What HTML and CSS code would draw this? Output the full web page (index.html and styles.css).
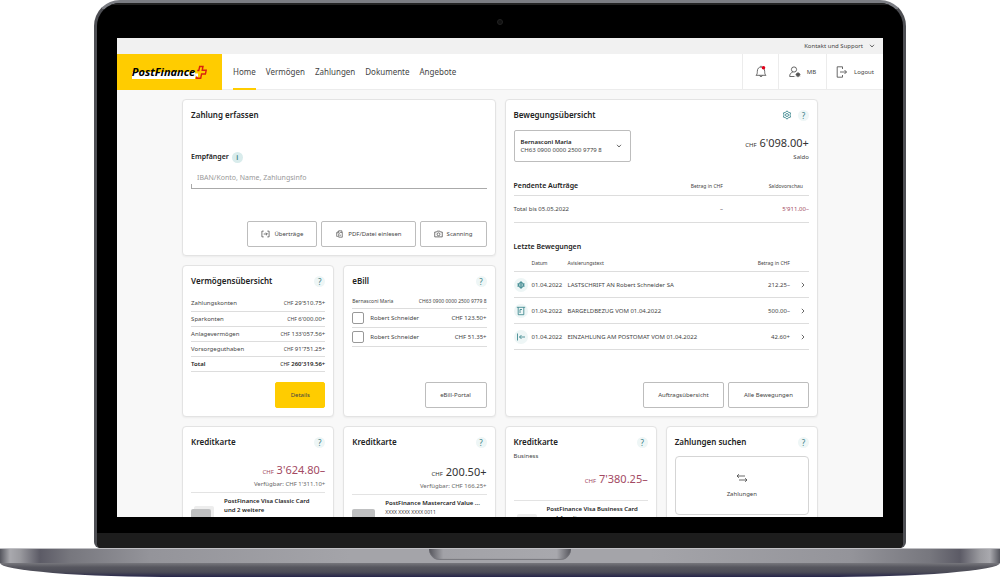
FILE: index.html
```html
<!DOCTYPE html>
<html lang="de">
<head>
<meta charset="utf-8">
<meta name="viewport" content="width=device-width, initial-scale=1">
<title>PostFinance E-Finance</title>
<link rel="stylesheet" href="styles.css">
</head>
<body>
<div class="laptop">
  <div class="lid">
    <div class="bezel-top"><span class="camera"></span></div>
    <div class="screen">
      <div class="topbar">
        <button class="support" type="button">Kontakt und Support
          <svg class="chevron" viewBox="0 0 6 4"><path d="M1 .8 3 3 5 .8"/></svg>
        </button>
      </div>
      <header class="header">
        <a class="logo" href="#" aria-label="PostFinance">
          <span class="logo-text">PostFinance</span>
          <svg class="logo-cross" viewBox="0 0 12 15"><path class="fill" d="M0 8.500H3V12H.5z"/><path class="line" d="M2.300 5.500H3.800L4.700 1.500H8L7.200 5.300H11.200L10.400 9H6.600L5.700 13.200H1.500L1.900 11.500"/></svg>
        </a>
        <nav class="nav">
          <a class="active" href="#">Home</a>
          <a href="#">Vermögen</a>
          <a href="#">Zahlungen</a>
          <a href="#">Dokumente</a>
          <a href="#">Angebote</a>
        </nav>
        <div class="tools">
          <button class="tool bell" type="button" aria-label="Mitteilungen">
            <svg viewBox="0 0 12 14"><path d="M1 10.300C2.300 9.200 2.300 8 2.300 6.500 2.300 3.500 4 2 6 2s3.700 1.500 3.700 4.500c0 1.500 0 2.700 1.300 3.800zM4.700 10.500c.2 1.500 2.400 1.500 2.600 0M6 2V.8"/><circle class="dot" cx="8.500" cy="2.800" r="1.800"/></svg>
          </button>
          <button class="tool user" type="button">
            <svg viewBox="0 0 12 12"><circle cx="5" cy="3.500" r="2.600"/><path d="M3.700 6.200C1.500 7 .7 8 .7 10.500H5.500"/><circle cx="9" cy="8.700" r="1.500"/><path d="M9 6.200v5M6.500 8.700h5M7.300 7l3.400 3.400M10.700 7 7.300 10.400"/></svg>
            <span>MB</span>
          </button>
          <button class="tool logout" type="button">
            <svg viewBox="0 0 12 12"><path d="M6.500 3V.8H1.200v10.400h5.300V9M4 6h6.500M8.500 4l2 2-2 2"/></svg>
            <span>Logout</span>
          </button>
        </div>
      </header>

      <main class="dashboard">
        <section class="card pay">
          <h2>Zahlung erfassen</h2>
          <div class="field">
            <div class="field-label">
              <label for="payee">Empfänger</label>
              <button class="round info" type="button" aria-label="Information">i</button>
            </div>
            <input id="payee" type="text" placeholder="IBAN/Konto, Name, Zahlungsinfo">
          </div>
          <div class="actions">
            <button class="btn" type="button"><svg viewBox="0 0 10 8"><path d="M3 .8H1v6.400h2M7 .8h2v6.400H7M3 4h4M5.500 2.500 7 4 5.500 5.500"/></svg>Überträge</button>
            <button class="btn" type="button"><svg viewBox="0 0 10 10"><path d="M3 8H1.500V3.500L4 1h4v2M4 1v2.500H1.500M4 5l2-2h2.500v6H4zM5 6.500h2"/></svg>PDF/Datei einlesen</button>
            <button class="btn" type="button"><svg viewBox="0 0 10 8"><path d="M.8 1.800h2L3.500.8h3l.7 1h2v5.400H.8z"/><circle cx="5" cy="4.300" r="1.600"/></svg>Scanning</button>
          </div>
        </section>

        <section class="card moves">
          <div class="card-head">
            <h2>Bewegungsübersicht</h2>
            <button class="gear" type="button" aria-label="Einstellungen"><svg viewBox="0 0 10 10"><path d="M5 .8 6.200 2.200 8.600 2.900 8 5l.6 2.100-2.400.7L5 9.200 3.800 7.800 1.400 7.100 2 5 1.400 2.900 3.800 2.200z"/><circle cx="5" cy="5" r="1.500"/></svg></button>
            <button class="round" type="button" aria-label="Hilfe">?</button>
          </div>
          <div class="account-row">
            <button class="account" type="button" aria-haspopup="listbox">
              <span><strong>Bernasconi Maria</strong><br>CH63 0900 0000 2500 9779 8</span>
              <svg class="chevron" viewBox="0 0 6 4"><path d="M1 .8 3 3 5 .8"/></svg>
            </button>
            <div class="balance">
              <div class="amount"><small>CHF</small> 6'098.00+</div>
              <div class="balance-label">Saldo</div>
            </div>
          </div>
          <table class="pending">
            <thead><tr><th>Pendente Aufträge</th><th class="num">Betrag in CHF</th><th class="num preview">Saldovorschau</th></tr></thead>
            <tbody><tr><td>Total bis 05.05.2022</td><td class="num">–</td><td class="num red">5'911.00–</td></tr></tbody>
          </table>
          <h3>Letzte Bewegungen</h3>
          <table class="latest">
            <thead><tr><th class="c-icon"></th><th class="c-date">Datum</th><th>Avisierungstext</th><th class="num">Betrag in CHF</th><th class="c-go"></th></tr></thead>
            <tbody>
              <tr><td><span class="round type"><svg viewBox="0 0 10 10"><circle cx="5" cy="5" r="2.600"/><path d="M5 1v8M1.200 4h7.600M1.200 6h7.600"/></svg></span></td><td>01.04.2022</td><td>LASTSCHRIFT AN Robert Schneider SA</td><td class="num">212.25–</td><td class="go"><svg viewBox="0 0 4 6"><path d="M.8.8 3 3 .8 5.200"/></svg></td></tr>
              <tr><td><span class="round type"><svg viewBox="0 0 10 10"><path d="M.8 1.300h8.400M2.200 1.300v7.400h5.600V1.300M4 7V3.500h2"/></svg></span></td><td>01.04.2022</td><td>BARGELDBEZUG VOM 01.04.2022</td><td class="num">500.00–</td><td class="go"><svg viewBox="0 0 4 6"><path d="M.8.8 3 3 .8 5.200"/></svg></td></tr>
              <tr><td><span class="round type"><svg viewBox="0 0 10 10"><path d="M1.500 1.500v7M3.500 5h5.500M5.500 3l-2 2 2 2"/></svg></span></td><td>01.04.2022</td><td>EINZAHLUNG AM POSTOMAT VOM 01.04.2022</td><td class="num">42.60+</td><td class="go"><svg viewBox="0 0 4 6"><path d="M.8.8 3 3 .8 5.200"/></svg></td></tr>
            </tbody>
          </table>
          <div class="actions wide">
            <button class="btn" type="button">Auftragsübersicht</button>
            <button class="btn" type="button">Alle Bewegungen</button>
          </div>
        </section>

        <section class="card">
          <div class="card-head">
            <h2>Vermögensübersicht</h2>
            <button class="round" type="button" aria-label="Hilfe">?</button>
          </div>
          <table class="assets">
            <tbody>
              <tr><td>Zahlungskonten</td><td class="num"><small>CHF</small> 29'510.75+</td></tr>
              <tr><td>Sparkonten</td><td class="num"><small>CHF</small> 6'000.00+</td></tr>
              <tr><td>Anlagevermögen</td><td class="num"><small>CHF</small> 133'057.56+</td></tr>
              <tr><td>Vorsorgeguthaben</td><td class="num"><small>CHF</small> 91'751.25+</td></tr>
              <tr class="total"><td>Total</td><td class="num"><small>CHF</small> 260'319.56+</td></tr>
            </tbody>
          </table>
          <div class="actions"><button class="btn primary" type="button">Details</button></div>
        </section>

        <section class="card">
          <div class="card-head">
            <h2>eBill</h2>
            <button class="round" type="button" aria-label="Hilfe">?</button>
          </div>
          <div class="ebill-account"><span>Bernasconi Maria</span><span>CH63 0900 0000 2500 9779 8</span></div>
          <label class="bill"><input type="checkbox"><span>Robert Schneider</span><span>CHF 123.50+</span></label>
          <label class="bill"><input type="checkbox"><span>Robert Schneider</span><span>CHF 51.35+</span></label>
          <div class="actions"><button class="btn portal" type="button">eBill-Portal</button></div>
        </section>

        <section class="card credit">
          <div class="card-head"><h2>Kreditkarte</h2><button class="round" type="button" aria-label="Hilfe">?</button></div>
          <div class="credit-sum">
            <div class="amount red"><small>CHF</small> 3'624.80–</div>
            <div class="available">Verfügbar: CHF 1'311.10+</div>
          </div>
          <div class="product">
            <span class="thumb stack"></span>
            <div><strong>PostFinance Visa Classic Card<br>und 2 weitere</strong></div>
          </div>
        </section>

        <section class="card credit">
          <div class="card-head"><h2>Kreditkarte</h2><button class="round" type="button" aria-label="Hilfe">?</button></div>
          <div class="credit-sum low">
            <div class="amount"><small>CHF</small> 200.50+</div>
            <div class="available">Verfügbar: CHF 166.25+</div>
          </div>
          <div class="product">
            <span class="thumb"></span>
            <div><strong>PostFinance Mastercard Value ...</strong><br><span class="masked">XXXX XXXX XXXX 0011</span></div>
          </div>
        </section>

        <section class="card credit">
          <div class="card-head"><h2>Kreditkarte</h2><button class="round" type="button" aria-label="Hilfe">?</button></div>
          <div class="subtitle">Business</div>
          <div class="credit-sum business">
            <div class="amount red"><small>CHF</small> 7'380.25–</div>
          </div>
          <div class="product">
            <span class="thumb stack"></span>
            <div><strong>PostFinance Visa Business Card<br>und 4 weitere</strong></div>
          </div>
        </section>

        <section class="card credit">
          <div class="card-head"><h2>Zahlungen suchen</h2><button class="round" type="button" aria-label="Hilfe">?</button></div>
          <button class="tile" type="button">
            <svg viewBox="0 0 12 10"><path d="M1 3h8M3 1.200 1 3l2 1.800M11 7H3M9 5.200 11 7 9 8.800"/></svg>
            Zahlungen
          </button>
        </section>
      </main>
    </div>
    <div class="bezel-bottom"></div>
  </div>
  <div class="base"><span class="notch"></span></div>
  <div class="underside"></div>
</div>
</body>
</html>
```
FILE: styles.css
```css
* { box-sizing: border-box; }

body {
  margin: 0;
  background: #fff;
  color: #444;
  font-family: "Noto Sans", "Open Sans", sans-serif;
  font-size: 6px;
  line-height: 8px;
}

button, input { font: inherit; color: inherit; }
button { margin: 0; padding: 0; border: 0; background: none; }
a { color: inherit; text-decoration: none; }
h2, h3 { margin: 0; color: #222; font-size: 8px; line-height: 12px; font-weight: 600; }
h3 { font-size: 7px; }
small { font-size: 5px; font-weight: 400; }
strong { color: #222; font-weight: 600; }
svg { fill: none; stroke: #444; stroke-width: 0.8; flex: none; }
table { width: 100%; border-collapse: collapse; }
th, td { padding: 0; text-align: left; font-weight: 400; white-space: nowrap; }
.num { text-align: right; }
.red { color: #a34a63; }

/* Laptop */
.laptop { display: flex; flex-direction: column; height: 100vh; }

.lid {
  display: flex;
  flex: 1;
  flex-direction: column;
  width: 81.2%;
  min-height: 0;
  margin: 0 auto;
  overflow: hidden;
  border: 3px solid #4e4f54;
  border-top-color: #7b7d83;
  border-bottom: 0;
  border-radius: 26px 26px 6px 6px;
  background: #000;
}

.bezel-top { display: flex; flex: none; align-items: center; justify-content: center; height: 35px; border-top: 2px solid #222; }
.camera { width: 6px; height: 6px; border: 1px solid #222; border-radius: 50%; background: #111; }
.bezel-bottom { flex: none; height: 31px; border-bottom: 15px solid #1d1d1d; }

.base {
  display: flex;
  flex: none;
  justify-content: center;
  height: 15px;
  border-top: 1px solid #c0c0c4;
  background: linear-gradient(90deg, #55565e 0, #a9a9ae 1%, #9a9a9f 2%, #5c5b66 4%, #77777e 7%, #94949a 15%, #a4a4a9 35%, #a4a4a9 65%, #94949a 85%, #77777e 93%, #5c5b66 96%, #9a9a9f 98%, #a9a9ae 99%, #55565e);
}
.notch { width: 142px; height: 11px; border-radius: 0 0 12px 12px; background: linear-gradient(90deg, #55555c, #a2a2a7 10%, #a8a8ad 90%, #55555c); box-shadow: inset 0 -1px 1px #77777d; }
.underside { flex: none; height: 14px; border-radius: 0 0 180px 180px / 0 0 14px 14px; background: linear-gradient(#77777d, #56565e 30%, #4c4c57 65%, #26254a); }

/* Application frame */
.screen { flex: 1; min-height: 0; margin: 0 20px; overflow: hidden; background: #f8f8f8; }
.topbar { display: flex; justify-content: flex-end; height: 16px; padding-right: 8px; background: #f1f1f1; }
.support { display: flex; gap: 6px; align-items: center; }
.chevron { width: 6px; height: 4px; }

.header { display: flex; height: 36px; border-bottom: 1px solid #ececec; background: #fff; }
.logo { display: flex; align-items: center; justify-content: center; width: 105px; height: 36px; background: #fc0; }
.logo-text { color: #000; font: italic 700 11px/14px "Noto Sans", sans-serif; background: linear-gradient(transparent 50%, #fff 50%); }
.logo-cross { width: 12px; height: 15px; }
.logo-cross .fill { fill: #fff; stroke: none; }
.logo-cross .line { stroke: #d9230f; stroke-width: 1.4; }

.nav { display: flex; gap: 10px; padding-left: 11px; font-size: 8px; }
.nav a { display: flex; align-items: center; height: 36px; padding-top: 2px; border-bottom: 2px solid transparent; }
.nav .active { border-bottom-color: #fc0; }

.tools { display: flex; margin-left: auto; }
.tool { display: flex; gap: 6px; align-items: center; justify-content: center; border-left: 1px solid #ececec; }
.tool svg { width: 12px; height: 12px; }
.bell { width: 36px; }
.bell svg { height: 14px; }
.bell .dot { fill: #e2001a; stroke: none; }
.user { width: 48px; }
.logout { width: 57px; }

/* Cards */
.dashboard {
  display: grid;
  grid-template-columns: repeat(4, minmax(0, 1fr));
  grid-template-rows: minmax(157px, auto) minmax(152px, auto) minmax(150px, auto);
  gap: 9px;
  padding: 9px 8.5%;
}
.card { display: flex; flex-direction: column; padding: 9px 8px 8px; border: 1px solid #e3e3e3; border-radius: 4px; background: #fff; box-shadow: 0 1px 2px #0000000d; }
.pay { grid-column: span 2; }
.moves { grid-column: span 2; grid-row: span 2; }
.card-head { display: flex; gap: 6px; align-items: center; height: 12px; }
.card-head h2 { flex: 1; }

.round { display: inline-flex; flex: none; align-items: center; justify-content: center; width: 11px; height: 11px; border-radius: 50%; background: #eef6f6; color: #3b7f86; font-size: 8px; line-height: 11px; }
.info { background: #d9ecec; font-size: 7px; }
.gear svg { display: block; width: 10px; height: 10px; stroke: #2f7f86; }

.actions { display: flex; gap: 4px; justify-content: flex-end; margin-top: auto; }
.btn { display: flex; gap: 4px; align-items: center; justify-content: center; height: 26px; padding: 0 13px; border: 1px solid #bdbdbd; border-radius: 2px; background: #fff; }
.btn svg { width: 9px; height: 8px; }
.primary { width: 50px; border-color: #fc0; background: #fc0; }
.portal { width: 62px; padding: 0; }
.wide .btn { width: 81px; padding: 0; }

.field { margin-top: 30px; }
.field-label { display: flex; gap: 3px; align-items: center; height: 12px; color: #222; font-size: 7px; font-weight: 600; }
.field input { display: block; width: 100%; height: 26px; padding: 4px 6px 0; border: 0; border-bottom: 1px solid #aaa; outline: 0; background: linear-gradient(#aaa, #aaa) 0 100% / 1px 4px no-repeat; font-size: 7px; }
.field input::placeholder { color: #999; opacity: 1; }

.account-row { display: flex; justify-content: space-between; margin-top: 9px; }
.account { display: flex; align-items: center; justify-content: space-between; width: 117px; height: 32px; padding: 0 8px 0 6px; border: 1px solid #bdbdbd; border-radius: 2px; text-align: left; }
.balance { padding-top: 6px; text-align: right; }
.amount { color: #333; font-size: 11px; line-height: 13px; }
.amount.red { color: #a34a63; }
.amount small { font-size: 6px; }
.balance-label { line-height: 11px; }

.pending { margin-top: 15px; }
.pending th { height: 17px; border-bottom: 1px solid #ddd; font-size: 5px; }
.pending th:first-child { color: #222; font-size: 7px; font-weight: 600; }
.pending td { height: 27px; border-bottom: 1px solid #ddd; }
.pending .preview { width: 86px; padding-right: 6px; }
.moves h3 { margin-top: 18px; }
.latest { margin-top: 3px; }
.latest th { height: 16px; border-bottom: 1px solid #ddd; font-size: 5px; }
.latest td { height: 26px; border-bottom: 1px solid #ddd; }
.c-icon { width: 18px; }
.c-date { width: 36px; }
.c-go { width: 19px; }
.go { text-align: right; }
.go svg { width: 4px; height: 6px; margin-right: 4px; vertical-align: middle; }
.type { width: 14px; height: 14px; vertical-align: middle; }
.type svg { width: 10px; height: 10px; stroke: #2f7f86; }

.assets { margin-top: 9px; }
.assets td { height: 15px; border-bottom: 1px solid #ddd; }
.total td { color: #222; font-weight: 600; }

.ebill-account { display: flex; justify-content: space-between; height: 22px; padding-top: 10px; border-bottom: 1px solid #ddd; font-size: 5px; }
.bill { display: flex; gap: 6px; align-items: center; height: 19px; border-bottom: 1px solid #ddd; }
.bill input { width: 12px; height: 12px; margin: 0; border: 1px solid #999; border-radius: 2px; appearance: none; background: #fff; }
.bill span:last-child { margin-left: auto; }

.subtitle { margin-top: 4px; }
.credit-sum { padding: 15px 0 2px; border-bottom: 1px solid #e3e3e3; text-align: right; }
.credit-sum.low { padding-top: 17px; }
.credit-sum.business { padding: 12px 0; }
.available { color: #666; line-height: 11px; }
.product { display: flex; gap: 10px; padding-top: 4px; white-space: nowrap; }
.product div { line-height: 9px; }
.masked { font-size: 5px; }
.thumb { flex: none; width: 23px; height: 15px; margin-top: 10px; border-radius: 2px; background: #bfc0c1; }
.stack { width: 20px; margin-top: 12px; margin-right: 3px; box-shadow: 3px -3px #ededed; }

.tile { display: flex; flex-direction: column; gap: 7px; align-items: center; justify-content: center; height: 59px; margin-top: 8px; border: 1px solid #d5d5d5; border-radius: 4px; }
.tile svg { width: 12px; height: 10px; }
```
